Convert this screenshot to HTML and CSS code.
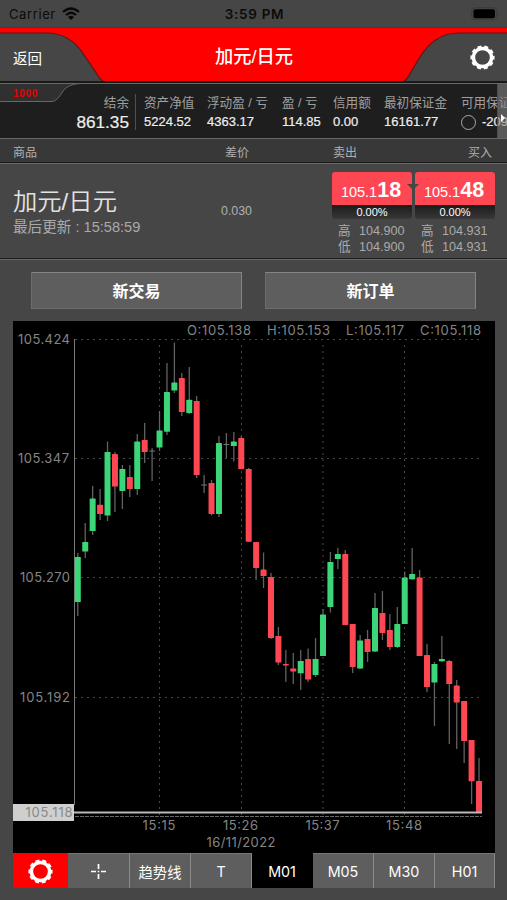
FILE: index.html
```html
<!DOCTYPE html>
<html lang="zh-CN">
  <head>
    <meta charset="UTF-8" />
    <meta name="viewport" content="width=device-width, initial-scale=1.0" />
    <title>加元/日元</title>
    <link rel="stylesheet" href="styles.css">
  </head>
  <body>
    <svg class="defs" width="0" height="0">
      <symbol id="gear" viewBox="0 0 24 24">
        <circle cx="12" cy="12" r="8.7" fill="none" stroke="#fff" stroke-width="3.3" />
        <circle cx="12" cy="12" r="10.2" fill="none" stroke="#fff" stroke-width="2.8" stroke-dasharray="3.7 2.709" stroke-dashoffset="1.85" />
      </symbol>
    </svg>

    <div class="status">
      <div class="carrier">
        <span>Carrier</span>
        <svg width="18" height="14" viewBox="0 0 18 14">
          <g fill="none" stroke="#080808" stroke-width="2.3">
            <path d="M1 5 Q9 -2 17 5" />
            <path d="M4 8 Q9 3.6 14 8" />
          </g>
          <path d="M6 10 Q9 7.5 12 10 L9 13Z" fill="#080808" />
        </svg>
      </div>
      <div class="time">3:59 PM</div>
      <svg class="battery" width="29" height="14" viewBox="0 0 29 14">
        <rect x=".7" y=".7" width="25" height="12" rx="3.5" fill="none" stroke="#3a3a3a" />
        <rect x="2.5" y="2.3" width="21.5" height="9" rx="2" />
        <path d="M27.2 4.8q2 2 0 4z" fill="#3a3a3a" />
      </svg>
    </div>

    <div class="header">
      <svg class="header-bg" width="507" height="56" viewBox="0 0 507 56">
        <path d="M0 0H507V56H0Z" fill="#fe0000" />
        <path d="M0 .5H507" stroke="#8a1c1c" />
        <path d="M-2 6H46C65 6 76 15 84 28L95 44Q100 53 105 56H-2Z" fill="#464646" stroke="#5a1717" stroke-width="1.2" />
        <path d="M509 6H459C440 6 428 17 420 30L411 45Q407 53 402 56H509Z" fill="#464646" stroke="#5a1717" stroke-width="1.2" />
        <path d="M0 55H507" stroke="#191919" stroke-width="2" />
      </svg>
      <div class="back">返回</div>
      <h1>加元/日元</h1>
      <svg class="gear" width="25" height="25"><use href="#gear" /></svg>
    </div>

    <div class="account">
      <svg class="tab" width="80" height="21" viewBox="0 0 80 21">
        <path d="M0 0H77Q68 1 63 8Q57 18 52 18.5H0Z" fill="#303030" />
        <path d="M80 .5Q68 1 63 8Q57 18.5 52 18.5H0" fill="none" stroke="#686868" />
      </svg>
      <div class="account-id">1000</div>
      <div class="stat balance"><span>结余</span><b>861.35</b></div>
      <div class="stat equity"><span>资产净值</span><b>5224.52</b></div>
      <div class="stat floating"><span>浮动盈 / 亏</span><b>4363.17</b></div>
      <div class="stat profit"><span>盈 / 亏</span><b>114.85</b></div>
      <div class="stat credit"><span>信用额</span><b>0.00</b></div>
      <div class="stat margin"><span>最初保证金</span><b>16161.77</b></div>
      <div class="stat free"><span>可用保证</span><b><i></i>-209</b></div>
      <div class="drawer"></div>
    </div>

    <div class="columns">
      <span>商品</span>
      <span>差价</span>
      <span>卖出</span>
      <span>买入</span>
    </div>

    <div class="quote">
      <div class="symbol">
        <h2>加元/日元</h2>
        <p>最后更新 : 15:58:59</p>
      </div>
      <div class="spread">0.030</div>
      <div class="prices">
        <div class="price">
          <div class="rate">105.1<b>18</b></div>
          <div class="change">0.00%</div>
          <div class="range"><span>高</span><span>104.900</span><span>低</span><span>104.900</span></div>
        </div>
        <div class="price">
          <div class="rate">105.1<b>48</b></div>
          <div class="change">0.00%</div>
          <div class="range"><span>高</span><span>104.931</span><span>低</span><span>104.931</span></div>
        </div>
        <div class="arrow"></div>
      </div>
    </div>

    <div class="actions">
      <button>新交易</button>
      <button>新订单</button>
    </div>

    <svg class="chart" width="482" height="532" viewBox="13 321 482 532">
      <g class="grid">
        <path d="M75 339.5H481M75 458.5H481M75 577.5H481M75 697.5H481" />
        <path d="M159.5 345V817M241.5 345V817M323 345V817M404.5 345V817" />
      </g>
      <path class="axis" d="M74.5 339V805" />
      <g id="candles"></g>
      <path class="bottom" d="M75 816.5H482" />
      <path class="last" d="M74 812.5H482" />
      <rect x="13" y="804" width="61" height="17" fill="#cfcfcf" />
      <g class="labels" text-anchor="end">
        <text x="70" y="344" textLength="52">105.424</text>
        <text x="69" y="463" textLength="51">105.347</text>
        <text x="70" y="582" textLength="50">105.270</text>
        <text x="70" y="702" textLength="50">105.192</text>
        <text class="last-label" x="72.5" y="817" textLength="47">105.118</text>
      </g>
      <g class="labels">
        <text x="187" y="335" textLength="64">O:105.138</text>
        <text x="267" y="335" textLength="63">H:105.153</text>
        <text x="346" y="335" textLength="58">L:105.117</text>
        <text x="420" y="335" textLength="61">C:105.118</text>
      </g>
      <g class="labels" text-anchor="middle">
        <text x="159" y="830" textLength="33">15:15</text>
        <text x="240.5" y="830" textLength="35">15:26</text>
        <text x="322.5" y="830" textLength="34">15:37</text>
        <text x="404" y="830" textLength="36">15:48</text>
        <text x="241" y="847" textLength="69">16/11/2022</text>
      </g>
    </svg>

    <div class="toolbar">
      <div class="tool settings"><svg width="25" height="25"><use href="#gear" /></svg></div>
      <div class="tool">
        <svg width="17" height="17" viewBox="0 0 17 17">
          <path d="M8.5 1V6M8.5 11V16M1 8.5H6M11 8.5H16M7.7 8.5H9.3" stroke="#fff" stroke-width="1.7" />
        </svg>
      </div>
      <div class="tool">趋势线</div>
      <div class="tool">T</div>
      <div class="tool active">M01</div>
      <div class="tool">M05</div>
      <div class="tool">M30</div>
      <div class="tool">H01</div>
    </div>

    <script src="chart.js"></script>
  </body>
</html>
```
FILE: styles.css
```css
body {
  margin: 0;
  width: 507px;
  height: 900px;
  overflow: hidden;
  background: #464646;
  color: #fff;
  font-family: "Liberation Sans", "Noto Sans CJK SC", sans-serif;
}
.defs {
  position: absolute;
}
.status {
  display: grid;
  grid-template-columns: 1fr auto 1fr;
  align-items: center;
  height: 27px;
  padding: 0 7px 0 9px;
  box-sizing: border-box;
  color: #0b0b0b;
  font-family: Inter, sans-serif;
  font-size: 13px;
}
.carrier {
  display: flex;
  align-items: center;
  gap: 6px;
  letter-spacing: 0.6px;
}
.time {
  font-weight: 600;
  font-size: 13.5px;
  letter-spacing: 0.7px;
}
.battery {
  justify-self: end;
}
.header {
  position: relative;
  display: grid;
  grid-template-columns: 1fr auto 1fr;
  align-items: center;
  height: 56px;
  padding: 4px 12px 0 13px;
  box-sizing: border-box;
}
.header-bg {
  position: absolute;
  left: 0;
  top: 0;
}
.back, h1, .gear {
  position: relative;
}
.back {
  font-size: 14.5px;
}
h1 {
  margin: 0;
  font-size: 18.3px;
  line-height: 24px;
  font-weight: 500;
}
.gear {
  justify-self: end;
}
.account {
  position: relative;
  display: flex;
  height: 56px;
  box-sizing: border-box;
  padding-top: 10px;
  background: #1e1e1e;
  border-top: 1px solid #686868;
  border-bottom: 1px solid #686868;
  overflow: hidden;
}
.tab {
  position: absolute;
  left: 0;
  top: -1px;
}
.account-id {
  position: absolute;
  left: 13px;
  top: 4px;
  color: #e50000;
  font-size: 10px;
  font-weight: bold;
  line-height: 12px;
  letter-spacing: 0.7px;
}
.stat {
  flex: none;
  box-sizing: border-box;
  white-space: nowrap;
}
.stat span, .stat b {
  display: block;
  line-height: 18px;
}
.stat span {
  color: #a0a0a0;
  font-size: 12.6px;
}
.stat b {
  display: flex;
  align-items: center;
  margin-top: 1px;
  height: 18px;
  color: #eee;
  font-size: 13px;
  font-weight: normal;
  -webkit-text-stroke: 0.2px #eee;
}
.balance {
  width: 136px;
  height: 36px;
  padding-right: 6px;
  border-right: 1px solid #505050;
  text-align: right;
}
.balance b {
  justify-content: flex-end;
  font-size: 17.2px;
}
.equity {
  width: 71px;
  padding-left: 8px;
}
.floating {
  width: 75px;
}
.profit {
  width: 51px;
}
.credit {
  width: 51px;
}
.margin {
  width: 77px;
}
.free i {
  width: 13px;
  height: 13px;
  margin-right: 6px;
  border: 1px solid #aaa;
  border-radius: 50%;
}
.drawer {
  position: absolute;
  right: 0;
  top: 0;
  width: 9px;
  height: 54px;
  background: rgba(130, 130, 130, 0.6);
  border-left: 1px solid #d01515;
}
.drawer::before {
  content: "";
  position: absolute;
  left: 3px;
  top: 30px;
  border: 4px solid transparent;
  border-left-color: #fff;
}
.columns {
  display: grid;
  grid-template-columns: 212px 108px 135px 1fr;
  height: 24px;
  padding-left: 13px;
  box-sizing: border-box;
  background: #383838;
  border-bottom: 1px solid #191919;
  color: #b0b0b0;
  font-size: 12px;
  line-height: 28px;
}
.quote {
  display: flex;
  height: 96px;
  box-sizing: border-box;
  border-top: 1px solid #686868;
  border-bottom: 1px solid #1c1c1c;
  background: #464646;
}
.symbol {
  width: 221px;
  padding: 24px 0 0 13px;
  box-sizing: border-box;
}
h2 {
  margin: 0;
  color: #e2e2e2;
  font-size: 24.3px;
  line-height: 28px;
  font-weight: 350;
}
.symbol p {
  margin: 1px 0 0;
  color: #aaa;
  font-size: 14.6px;
  line-height: 20px;
}
.spread {
  width: 111px;
  padding-top: 40px;
  color: #b0b0b0;
  font-size: 12.4px;
  line-height: 15px;
}
.prices {
  position: relative;
  display: flex;
  gap: 3px;
  padding-top: 8px;
}
.price {
  width: 80px;
}
.rate {
  display: flex;
  justify-content: center;
  align-items: baseline;
  height: 33px;
  box-sizing: border-box;
  padding-top: 5px;
  padding-right: 2px;
  background: #ff4653;
  border-radius: 3px 3px 0 0;
  font-size: 14.5px;
  line-height: 26px;
}
.rate b {
  font-size: 21.5px;
}
.change {
  height: 14px;
  background: linear-gradient(#1b1b1b, #383838);
  border-radius: 0 0 3px 3px;
  font-size: 11px;
  line-height: 15px;
  text-align: center;
}
.range {
  display: grid;
  grid-template-columns: 21px 1fr;
  padding: 4px 0 0 6px;
  color: #aaa;
  font-size: 12.6px;
  line-height: 16px;
}
.arrow {
  position: absolute;
  left: 75px;
  top: 20px;
  border: 6px solid transparent;
  border-top-color: #464646;
  border-bottom: 0;
}
.actions {
  display: flex;
  gap: 23px;
  height: 62px;
  box-sizing: border-box;
  padding: 12px 31px 0;
  border-top: 1px solid #686868;
}
button {
  width: 212px;
  height: 37px;
  padding: 0 0 2px;
  background: #5e5e5e;
  border: 1px solid #858585;
  border-left-color: #6c6c6c;
  border-bottom-color: #6c6c6c;
  color: #fff;
  font-family: inherit;
  font-size: 16px;
  font-weight: bold;
}
.chart {
  display: block;
  margin-left: 13px;
  background: #000;
}
.grid {
  stroke: #484848;
  stroke-dasharray: 2 4;
}
.axis {
  stroke: #777;
}
.wick {
  stroke: #626262;
  stroke-width: 1.3;
}
.up {
  fill: #3bd677;
}
.down {
  fill: #ff4653;
}
.flat {
  fill: #777;
}
.last {
  stroke: #bababa;
  stroke-width: 2;
}
.bottom {
  stroke: #666;
  stroke-dasharray: 4 1;
}
.labels {
  fill: #858585;
  font-family: Inter, sans-serif;
  font-size: 13px;
}
.last-label {
  fill: #888;
}
.toolbar {
  display: grid;
  grid-template-columns: 55px 62px 61px 61px 61px 61px 61px 60px;
  width: 482px;
  height: 35px;
  margin-left: 13px;
}
.tool {
  display: flex;
  justify-content: center;
  align-items: center;
  box-sizing: border-box;
  background: #5e5e5e;
  border-top: 1px solid #767676;
  border-right: 1px solid #8a8a8a;
  font-family: Inter, "Noto Sans CJK SC", sans-serif;
  font-size: 14.3px;
}
.settings {
  background: #fe0000;
  border-color: #fe0000;
}
.active {
  background: #000;
  border-color: #000;
}
```
FILE: chart.js
```js
// high, body top, body bottom, low, type
const candles = [
  [553, 557, 602, 616, "up"],
  [523, 542, 551.5, 558, "up"],
  [486, 498.5, 531, 535, "up"],
  [489, 504.7, 514, 520, "down"],
  [441.5, 452, 515.5, 521, "up"],
  [452, 454, 486.5, 512, "down"],
  [465, 469, 491, 509, "up"],
  [465, 477, 489, 497, "down"],
  [434, 441.5, 489, 495, "up"],
  [423, 440, 452, 463, "down"],
  [448, 450.5, 451.5, 481, "flat"],
  [411, 430.5, 447.5, 451, "up"],
  [363, 392, 431.7, 435, "up"],
  [342.5, 382.5, 390.5, 393, "up"],
  [373, 378, 412, 416, "down"],
  [367, 399.7, 413, 414, "up"],
  [396, 401, 475, 478, "down"],
  [475, 484.5, 485.5, 493, "flat"],
  [480, 483, 514, 515.5, "down"],
  [436, 443, 514, 517, "up"],
  [433, 444, 445, 458, "flat"],
  [432, 441.5, 446, 461.5, "up"],
  [436, 438, 469, 469, "down"],
  [468, 469, 541.7, 542, "down"],
  [542, 542, 568, 580, "down"],
  [552.5, 569.5, 576, 588, "down"],
  [573, 577, 638, 639, "down"],
  [627, 636, 662.5, 665, "down"],
  [650, 664, 665.5, 682, "down"],
  [653, 668.5, 671.5, 684, "down"],
  [650, 661, 673.3, 690, "up"],
  [648.5, 659, 679.5, 682, "down"],
  [638, 659, 675, 677, "up"],
  [609, 614.5, 656, 656, "up"],
  [552, 562, 607, 612.5, "up"],
  [548, 554, 559, 569, "up"],
  [550, 554, 625, 625, "down"],
  [624, 624, 667, 673, "down"],
  [635, 640.5, 668.5, 669, "up"],
  [630, 639, 652, 662, "down"],
  [593, 608, 651.5, 652, "up"],
  [591, 613, 633, 640, "down"],
  [614, 630, 647, 650, "down"],
  [607, 624, 647, 648, "up"],
  [571.5, 577.5, 624, 624, "up"],
  [548, 574, 579.3, 580, "up"],
  [570, 577.5, 656, 656, "down"],
  [644, 655, 687, 692, "down"],
  [662, 664, 682.5, 726, "up"],
  [636, 659, 661.3, 662, "up"],
  [660, 661, 684, 744, "down"],
  [680, 685.5, 702.5, 749, "down"],
  [701, 701, 741, 763, "down"],
  [740, 740, 781.3, 804, "down"],
  [758, 781, 812.7, 812, "down"]
];

const first = 77.8;
const step = 7.43;

function drawCandles() {
  let html = "";
  candles.forEach(([high, top, bottom, low, type], i) => {
    const x = first + i * step;
    html += `<path class="wick" d="M${x} ${high}V${low}" />`;
    html += `<rect class="${type}" x="${x - 3}" y="${top}" width="6" height="${bottom - top}" rx="0.6" />`;
  });
  document.getElementById("candles").innerHTML = html;
}

drawCandles();
```
